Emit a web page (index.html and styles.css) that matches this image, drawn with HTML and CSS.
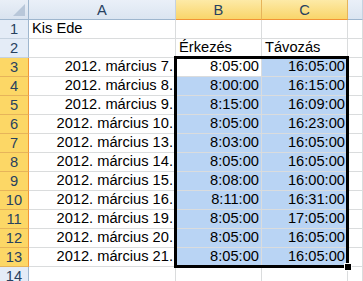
FILE: index.html
```html
<!DOCTYPE html>
<html>
<head>
  <title>Munkaidő</title>
  <link rel="stylesheet" href="styles.css">
</head>
<body>
  <div class="sheet">
    <div class="corner"><span class="tri"></span></div>
    <div class="colhead">A</div>
    <div class="colhead sel">B</div>
    <div class="colhead sel">C</div>
    <div class="colhead"></div>

    <div class="rowhead">1</div>
    <div class="cell">Kis Ede</div><div class="cell"></div><div class="cell"></div><div class="cell"></div>

    <div class="rowhead">2</div>
    <div class="cell"></div><div class="cell">Érkezés</div><div class="cell">Távozás</div><div class="cell"></div>

    <div class="rowhead sel">3</div>
    <div class="cell num">2012. március 7.</div><div class="cell num active">8:05:00</div><div class="cell num hl">16:05:00</div><div class="cell"></div>

    <div class="rowhead sel">4</div>
    <div class="cell num">2012. március 8.</div><div class="cell num hl">8:00:00</div><div class="cell num hl">16:15:00</div><div class="cell"></div>

    <div class="rowhead sel">5</div>
    <div class="cell num">2012. március 9.</div><div class="cell num hl">8:15:00</div><div class="cell num hl">16:09:00</div><div class="cell"></div>

    <div class="rowhead sel">6</div>
    <div class="cell num">2012. március 10.</div><div class="cell num hl">8:05:00</div><div class="cell num hl">16:23:00</div><div class="cell"></div>

    <div class="rowhead sel">7</div>
    <div class="cell num">2012. március 13.</div><div class="cell num hl">8:03:00</div><div class="cell num hl">16:05:00</div><div class="cell"></div>

    <div class="rowhead sel">8</div>
    <div class="cell num">2012. március 14.</div><div class="cell num hl">8:05:00</div><div class="cell num hl">16:05:00</div><div class="cell"></div>

    <div class="rowhead sel">9</div>
    <div class="cell num">2012. március 15.</div><div class="cell num hl">8:08:00</div><div class="cell num hl">16:00:00</div><div class="cell"></div>

    <div class="rowhead sel">10</div>
    <div class="cell num">2012. március 16.</div><div class="cell num hl">8:11:00</div><div class="cell num hl">16:31:00</div><div class="cell"></div>

    <div class="rowhead sel">11</div>
    <div class="cell num">2012. március 19.</div><div class="cell num hl">8:05:00</div><div class="cell num hl">17:05:00</div><div class="cell"></div>

    <div class="rowhead sel">12</div>
    <div class="cell num">2012. március 20.</div><div class="cell num hl">8:05:00</div><div class="cell num hl">16:05:00</div><div class="cell"></div>

    <div class="rowhead sel">13</div>
    <div class="cell num">2012. március 21.</div><div class="cell num hl">8:05:00</div><div class="cell num hl">16:05:00</div><div class="cell"></div>

    <div class="rowhead">14</div>
    <div class="cell"></div><div class="cell"></div><div class="cell"></div><div class="cell"></div>
  </div>
  <div class="selection"></div>
  <div class="handle"></div>
</body>
</html>
```

FILE: styles.css
```css
body {
  margin: 0;
  width: 363px;
  height: 281px;
  overflow: hidden;
  position: relative;
  background: #fff;
  font-family: "Liberation Sans", Arial, sans-serif;
  font-size: 11pt;
  color: #000;
}

.sheet {
  display: grid;
  grid-template-columns: 29px 147px 86px 86px 1fr;
  grid-template-rows: 20px repeat(14, 19px);
}

.sheet > div {
  box-sizing: border-box;
  border-right: 1px solid #dadcdd;
  border-bottom: 1px solid #dadcdd;
  white-space: nowrap;
  overflow: hidden;
}

.corner {
  position: relative;
  background: linear-gradient(#e9eff7, #d9e3ef);
  border-color: #9eb6ce !important;
}

.corner .tri {
  position: absolute;
  right: 3px;
  bottom: 3px;
  width: 0;
  height: 0;
  border-left: 12px solid transparent;
  border-bottom: 12px solid #b8c7d9;
}

.colhead {
  display: flex;
  align-items: center;
  justify-content: center;
  background: linear-gradient(#eaf0f8, #dbe5f1);
  border-right-color: #c5d2e0 !important;
  border-bottom-color: #9eb6ce !important;
  color: #27415f;
}

.colhead.sel {
  background: linear-gradient(#fdeaa7, #f9d56a);
  border-right-color: #e6b45a !important;
  border-bottom-color: #f29436 !important;
  color: #27415f;
}

.rowhead {
  display: flex;
  align-items: center;
  justify-content: center;
  background: #e4ecf7;
  border-right-color: #9eb6ce !important;
  border-bottom-color: #c5d2e0 !important;
  color: #27415f;
}

.rowhead.sel {
  background: #fcd766;
  border-right-color: #f29436 !important;
  border-bottom-color: #e6b45a !important;
}

.cell {
  display: flex;
  align-items: flex-end;
  padding: 0 2px 1px 3px;
  line-height: 17px;
}

.cell.num {
  justify-content: flex-end;
}

.cell.hl {
  background: #b9d4f4;
}

.cell.active {
  background: #fff;
}

.selection {
  position: absolute;
  left: 174px;
  top: 56px;
  width: 175px;
  height: 212px;
  box-sizing: border-box;
  border: 3px solid #000;
}

.handle {
  position: absolute;
  left: 344px;
  top: 263px;
  width: 6px;
  height: 6px;
  background: #000;
  border: 1px solid #fff;
}
```
